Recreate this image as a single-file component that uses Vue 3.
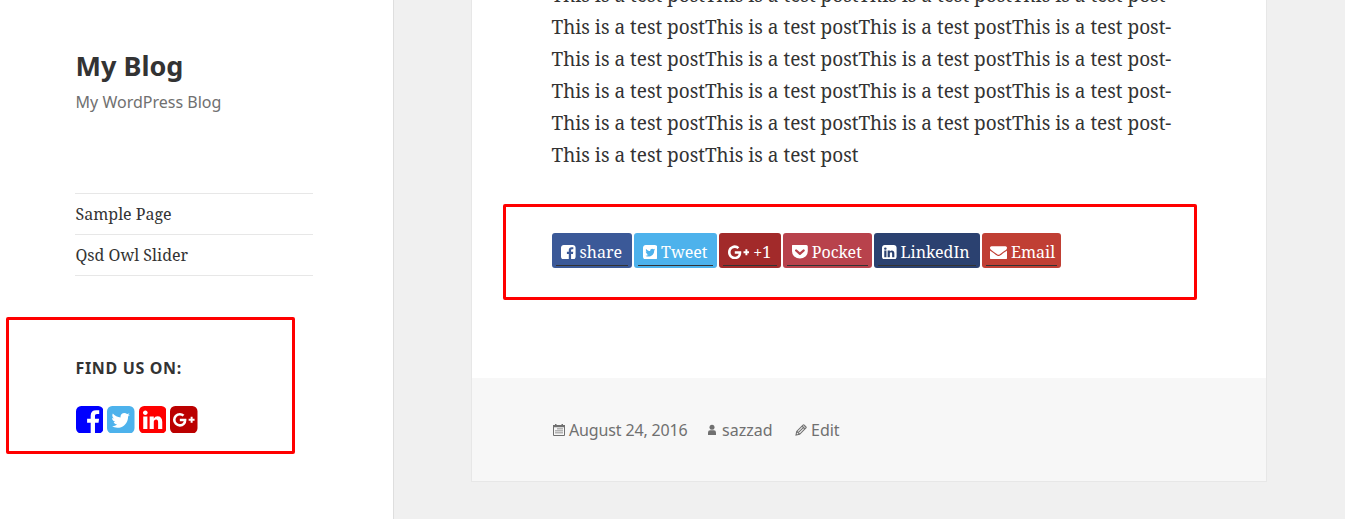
<script setup>
const sentence = 'This is a test post'
const lines = [
  ...Array.from({ length: 5 }, () => sentence.repeat(4) + '-'),
  sentence.repeat(2),
]

const frame = 'M1664 416v960q0 119-84.5 203.5t-203.5 84.5h-960q-119 0-203.5-84.5t-84.5-203.5v-960q0-119 84.5-203.5t203.5-84.5h960q119 0 203.5 84.5t84.5 203.5z'
const square = '128 128 1536 1536'
const facebook = 'M1376 128q119 0 203.5 84.5t84.5 203.5v960q0 119-84.5 203.5t-203.5 84.5h-188v-595h199l30-232h-229v-148q0-56 23.5-84t91.5-28l122-1v-207q-63-9-178-9-136 0-217.5 80t-81.5 226v171h-200v232h200v595h-532q-119 0-203.5-84.5t-84.5-203.5v-960q0-119 84.5-203.5t203.5-84.5h960z'
const twitter = 'M1408 610q-56 25-121 34 68-40 93-117-65 38-134 51-61-66-153-66-87 0-148.5 61.5t-61.5 148.5q0 29 5 48-129-7-242-65t-192-155q-29 50-29 106 0 114 91 175-47-1-100-26v2q0 75 50 133.5t123 72.5q-29 8-51 8-13 0-39-4 21 63 74.5 104t121.5 42q-116 90-261 90-26 0-50-3 148 94 322 94 112 0 210-35.5t168-95 120.5-137 75-162 24.5-168.5q0-18-1-27 63-45 105-109z' + frame
const linkedin = 'M365 1414h231v-694h-231v694zm246-908q-1-52-36-86t-93-34-94.5 34-36.5 86q0 51 35.5 85.5t92.5 34.5h1q59 0 95-34.5t36-85.5zm585 908h231v-398q0-154-73-233t-193-79q-136 0-209 117h2v-101h-231q3 66 0 694h231v-388q0-38 7-56 15-35 45-59.5t74-24.5q116 0 116 157v371z' + frame
const googleSquare = 'M1045 905q0-26-6-64h-362v132h217q-3 24-16.5 50t-37.5 53-66.5 44.5-96.5 17.5q-99 0-169-71t-70-171 70-171 169-71q92 0 153 59l104-101q-108-100-257-100-160 0-272 112.5t-112 271.5 112 271.5 272 112.5q165 0 266.5-105t101.5-270zm345 46h109v-110h-109v-110h-110v110h-110v110h110v110h110v-110z' + frame
const google = 'M1437 913q0 208-87 370.5t-248 254-369 91.5q-149 0-285-58t-234-156-156-234-58-285 58-285 156-234 234-156 285-58q286 0 491 192l-199 191q-117-113-292-113-123 0-227.5 62t-165.5 168.5-61 232.5 61 232.5 165.5 168.5 227.5 62q83 0 152.5-23t114.5-57.5 78.5-78.5 49-83 21.5-74h-416v-252h692q12 63 12 122zm867-122v210h-209v209h-210v-209h-209v-210h209v-209h210v209h209z'
const pocket = 'M150 128H1514Q1664 128 1664 290V790A768 768 0 0 1 128 790V290Q128 128 150 128ZM896 1170Q935 1170 965 1142L1337 785Q1375 749 1375 697Q1375 650 1341 617T1261 583Q1215 583 1181 615L896 888L611 615Q577 583 531 583Q485 583 451 617T417 697Q417 750 455 785L828 1142Q857 1170 896 1170Z'
const envelope = 'M1792 710v794q0 66-47 113t-113 47h-1472q-66 0-113-47t-47-113v-794q44 49 101 87 362 246 497 345 57 42 92.5 65.5t94.5 48 110 24.5h2q51 0 110-24.5t94.5-48 92.5-65.5q170-123 498-345 57-39 100-87zm0-294q0 79-49 151t-122 123q-376 261-468 325-10 7-42.5 31t-54 38.5-52 32.5-57.5 27-50 9h-2q-23 0-50-9t-57.5-27-52-32.5-54-38.5-42.5-31q-91-64-262-182.5t-205-142.5q-62-42-117-115.5t-55-136.5q0-78 41.5-130t118.5-52h1472q65 0 112.5 47t47.5 113z'

const socials = [
  { name: 'facebook', d: facebook },
  { name: 'twitter', d: twitter },
  { name: 'linkedin', d: linkedin },
  { name: 'google', d: googleSquare },
]
const shares = [
  { name: 'facebook', label: 'share', d: facebook, box: square },
  { name: 'twitter', label: 'Tweet', d: twitter, box: square },
  { name: 'google', label: '+1', d: google, box: '0 128 2304 1536' },
  { name: 'pocket', label: 'Pocket', d: pocket, box: square },
  { name: 'linkedin', label: 'LinkedIn', d: linkedin, box: square },
  { name: 'email', label: 'Email', d: envelope, box: '0 128 1792 1536' },
]
</script>

<template>
  <div class="page">
    <aside class="sidebar">
      <h1>My Blog</h1>
      <p class="tagline">My WordPress Blog</p>
      <nav>
        <a>Sample Page</a>
        <a>Qsd Owl Slider</a>
      </nav>
      <section class="find">
        <h2>FIND US ON:</h2>
        <div class="socials">
          <svg v-for="s in socials" :key="s.name" :class="s.name" :viewBox="square"><path :d="s.d" fill-rule="evenodd" /></svg>
        </div>
      </section>
    </aside>
    <main>
      <article>
        <div class="text">
          <p v-for="(line, i) in lines" :key="i"><span>{{ line }}</span></p>
        </div>
        <div class="share-frame">
          <a v-for="s in shares" :key="s.name" class="share" :class="s.name">
            <svg :viewBox="s.box" preserveAspectRatio="none"><path :d="s.d" fill-rule="evenodd" /></svg>
            <span>{{ s.label }}</span>
          </a>
        </div>
        <footer>
          <span class="meta date">
            <svg viewBox="0 0 12 12"><path d="M.5 1.5h11v10H.5z" fill="none" stroke="currentColor" /><path d="M0 1h12v2.3H0zM2 0h1.5v2H2zM8.5 0H10v2H8.5zM4 4.5h6v.8H4zM2 6.5h8v.8H2zM2 8.5h8v.8H2z" /></svg>
            <span>August 24, 2016</span>
          </span>
          <span class="meta author">
            <svg viewBox="0 0 12 12"><circle cx="6" cy="3.2" r="2.5" /><path d="M2 11V8.5Q2 6.3 4.2 6.3h3.6Q10 6.3 10 8.5V11z" /></svg>
            <span>sazzad</span>
          </span>
          <span class="meta edit">
            <svg viewBox="0 0 12 12"><path d="M1 11l.7-3.6L8 1.1Q8.6.6 9.2 1.1l1.7 1.7q.5.6 0 1.2L4.6 10.3zM2 7.5L4.5 10M3.2 8.7L9.4 2.6M7 2.1l3 3" fill="none" stroke="currentColor" stroke-width="1.1" /></svg>
            <span>Edit</span>
          </span>
        </footer>
      </article>
    </main>
  </div>
</template>

<style>
body { margin: 0; overflow: hidden; }
</style>

<style scoped>
.page { display: flex; width: 1345px; height: 519px; overflow: hidden; background: #f0f0f0; color: #333; font-family: "Noto Sans", sans-serif; }
.page * { box-sizing: border-box; }
h1, h2, p { margin: 0; }
.sidebar { width: 394px; flex: none; background: #fff; border-right: 1px solid #dedede; }
h1 { margin: 48px 0 0 75.6px; font-size: 27px; line-height: 36px; font-weight: 700; }
.tagline { margin: 7px 0 0 75.6px; font-size: 16px; line-height: 22px; color: #707070; }
nav { margin: 80px 0 0 75px; width: 238px; border-top: 1px solid #e7e7e7; font: 16px/24px "Noto Serif", "DejaVu Serif", serif; }
nav a { display: block; height: 41px; padding: 8px 0 0 .5px; border-bottom: 1px solid #e7e7e7; }
.find { margin: 41px 0 0 6px; width: 289px; height: 137px; border: 3px solid #f00; border-radius: 2px; padding: 36px 0 0 66.5px; }
h2 { font-size: 16px; line-height: 24px; letter-spacing: .66px; font-weight: 700; }
.socials { display: flex; gap: 4px; margin: 25.5px 0 0 0; }
.socials svg { width: 27.5px; height: 27.5px; }
.socials .facebook { fill: #00f; }
.socials .twitter { fill: #4db2ec; }
.socials .linkedin { fill: #f00; }
.socials .google { fill: #bb0000; }
svg { display: block; flex: none; fill: currentColor; }
main { padding-left: 77px; }
article { width: 796px; height: 482px; background: #fff; border: 1px solid #e7e7e7; border-top: 0; overflow: hidden; }
.text { margin: -21px 0 0 79.5px; font: 19px/32px "Noto Serif", "DejaVu Serif", serif; white-space: nowrap; }
.share-frame { display: flex; gap: 2px; margin: 33px 0 0 31px; width: 694px; height: 96px; border: 3px solid #f00; border-radius: 2px; padding: 26px 0 0 46px; }
.share { position: relative; display: flex; align-items: center; height: 35px; padding: 3px 0 0 9px; border-radius: 3px; color: #fff; font: 16px/26px "Noto Serif", "DejaVu Serif", serif; white-space: nowrap; }
.share svg { width: 14.6px; height: 14.6px; margin-right: 4px; }
.share::after { content: ""; position: absolute; left: 4px; right: 4px; bottom: 2px; height: 1px; background: #333; }
.share.facebook { width: 80px; background: #3b5998; }
.share.twitter { width: 83px; padding-left: 8.5px; background: #4db2ec; }
.share.google { width: 62px; background: #a22a2a; }
.share.google svg { width: 21.3px; }
.share.pocket { width: 89px; background: #b8424c; }
.share.pocket svg { width: 15.8px; }
.share.linkedin { width: 106px; padding-left: 8px; background: #2b4170; }
.share.email { width: 79px; padding-left: 8px; background: #c03f34; }
.share.email svg { width: 17px; }
footer { display: flex; margin-top: 78px; height: 103px; padding: 41px 0 0 80px; background: #f7f7f7; color: #707070; font-size: 16px; line-height: 22px; white-space: nowrap; }
.meta { display: flex; }
.meta svg { width: 12px; height: 12px; margin: 5px 4px 0 1px; }
.date { width: 153px; letter-spacing: -.15px; }
.author { width: 89px; }
</style>
